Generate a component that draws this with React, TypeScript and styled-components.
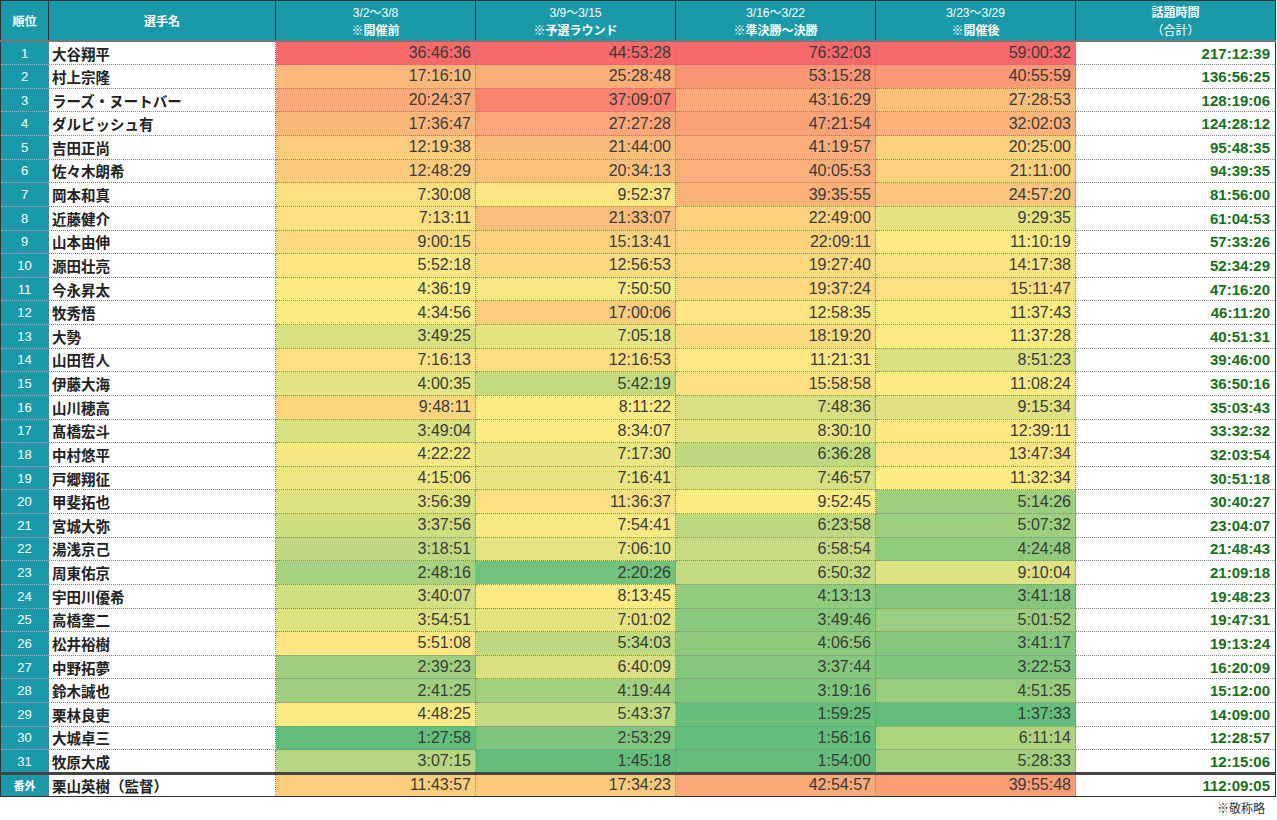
import React from 'react';
import styled, { createGlobalStyle } from 'styled-components';

type Row = [string, string, string, string, string, string, string];

const rows: Row[] = [
  ['1', '大谷翔平', '36:46:36', '44:53:28', '76:32:03', '59:00:32', '217:12:39'],
  ['2', '村上宗隆', '17:16:10', '25:28:48', '53:15:28', '40:55:59', '136:56:25'],
  ['3', 'ラーズ・ヌートバー', '20:24:37', '37:09:07', '43:16:29', '27:28:53', '128:19:06'],
  ['4', 'ダルビッシュ有', '17:36:47', '27:27:28', '47:21:54', '32:02:03', '124:28:12'],
  ['5', '吉田正尚', '12:19:38', '21:44:00', '41:19:57', '20:25:00', '95:48:35'],
  ['6', '佐々木朗希', '12:48:29', '20:34:13', '40:05:53', '21:11:00', '94:39:35'],
  ['7', '岡本和真', '7:30:08', '9:52:37', '39:35:55', '24:57:20', '81:56:00'],
  ['8', '近藤健介', '7:13:11', '21:33:07', '22:49:00', '9:29:35', '61:04:53'],
  ['9', '山本由伸', '9:00:15', '15:13:41', '22:09:11', '11:10:19', '57:33:26'],
  ['10', '源田壮亮', '5:52:18', '12:56:53', '19:27:40', '14:17:38', '52:34:29'],
  ['11', '今永昇太', '4:36:19', '7:50:50', '19:37:24', '15:11:47', '47:16:20'],
  ['12', '牧秀悟', '4:34:56', '17:00:06', '12:58:35', '11:37:43', '46:11:20'],
  ['13', '大勢', '3:49:25', '7:05:18', '18:19:20', '11:37:28', '40:51:31'],
  ['14', '山田哲人', '7:16:13', '12:16:53', '11:21:31', '8:51:23', '39:46:00'],
  ['15', '伊藤大海', '4:00:35', '5:42:19', '15:58:58', '11:08:24', '36:50:16'],
  ['16', '山川穂高', '9:48:11', '8:11:22', '7:48:36', '9:15:34', '35:03:43'],
  ['17', '髙橋宏斗', '3:49:04', '8:34:07', '8:30:10', '12:39:11', '33:32:32'],
  ['18', '中村悠平', '4:22:22', '7:17:30', '6:36:28', '13:47:34', '32:03:54'],
  ['19', '戸郷翔征', '4:15:06', '7:16:41', '7:46:57', '11:32:34', '30:51:18'],
  ['20', '甲斐拓也', '3:56:39', '11:36:37', '9:52:45', '5:14:26', '30:40:27'],
  ['21', '宮城大弥', '3:37:56', '7:54:41', '6:23:58', '5:07:32', '23:04:07'],
  ['22', '湯浅京己', '3:18:51', '7:06:10', '6:58:54', '4:24:48', '21:48:43'],
  ['23', '周東佑京', '2:48:16', '2:20:26', '6:50:32', '9:10:04', '21:09:18'],
  ['24', '宇田川優希', '3:40:07', '8:13:45', '4:13:13', '3:41:18', '19:48:23'],
  ['25', '高橋奎二', '3:54:51', '7:01:02', '3:49:46', '5:01:52', '19:47:31'],
  ['26', '松井裕樹', '5:51:08', '5:34:03', '4:06:56', '3:41:17', '19:13:24'],
  ['27', '中野拓夢', '2:39:23', '6:40:09', '3:37:44', '3:22:53', '16:20:09'],
  ['28', '鈴木誠也', '2:41:25', '4:19:44', '3:19:16', '4:51:35', '15:12:00'],
  ['29', '栗林良吏', '4:48:25', '5:43:37', '1:59:25', '1:37:33', '14:09:00'],
  ['30', '大城卓三', '1:27:58', '2:53:29', '1:56:16', '6:11:14', '12:28:57'],
  ['31', '牧原大成', '3:07:15', '1:45:18', '1:54:00', '5:28:33', '12:15:06'],
];

const extra: Row = ['番外', '栗山英樹（監督）', '11:43:57', '17:34:23', '42:54:57', '39:55:48', '112:09:05'];

const periods = [
  ['3/2〜3/8', '※開催前'],
  ['3/9〜3/15', '※予選ラウンド'],
  ['3/16〜3/22', '※準決勝〜決勝'],
  ['3/23〜3/29', '※開催後'],
];

// excel style 3 colour scale: green (min) -> yellow (median) -> red (max)
const GREEN = [99, 190, 123];
const YELLOW = [255, 235, 132];
const RED = [248, 105, 107];

const toSec = (t: string) => {
  const [h, m, s] = t.split(':').map(Number);
  return h * 3600 + m * 60 + s;
};

const mix = (a: number[], b: number[], f: number) =>
  `rgb(${a.map((v, i) => Math.round(v + (b[i] - v) * f)).join(',')})`;

const scales = [0, 1, 2, 3].map((c) => {
  const vals = rows.map((r) => toSec(r[c + 2])).sort((a, b) => a - b);
  return { min: vals[0], mid: vals[Math.floor(vals.length / 2)], max: vals[vals.length - 1] };
});

const cellColor = (col: number, t: string) => {
  const { min, mid, max } = scales[col];
  const v = Math.min(max, Math.max(min, toSec(t)));
  if (v <= mid) return mix(GREEN, YELLOW, (v - min) / (mid - min));
  return mix(YELLOW, RED, (v - mid) / (max - mid));
};

const GlobalStyle = createGlobalStyle`
  body {
    margin: 0;
    background: #fff;
    font-family: "Liberation Sans", "Noto Sans CJK JP", sans-serif;
  }
`;

const Wrap = styled.div`
  width: 1275px;
`;

const Table = styled.table`
  width: 1275px;
  border-collapse: collapse;
  table-layout: fixed;
  border: 1px solid #333;
`;

const HeadCell = styled.th`
  height: 37px;
  padding: 2px 0 0;
  background: #1a9aa8;
  color: #fff;
  border: 1px solid #333;
  border-bottom: 2px solid #777;
  font-size: 12px;
  font-weight: bold;
  line-height: 18px;
  vertical-align: middle;
`;

const HeadSub = styled.div<{ $light?: boolean }>`
  font-weight: ${(p) => (p.$light ? 'normal' : 'bold')};
`;

const BodyRow = styled.tr<{ $extra?: boolean }>`
  height: ${(p) => (p.$extra ? '23px' : '23.64px')};
  ${(p) => p.$extra && 'border-top: 3px solid #444;'}
`;

const RankCell = styled.td<{ $small?: boolean }>`
  padding: 0;
  background: #1a9aa8;
  color: #fff;
  text-align: center;
  font-size: ${(p) => (p.$small ? '11px' : '13px')};
  font-weight: ${(p) => (p.$small ? 'bold' : 'normal')};
  border: 1px dotted #8fb9be;
  border-left: 1px solid #333;
  border-right: 1px dotted #777;
`;

const NameCell = styled.td`
  padding: 0 3px;
  font-size: 14.5px;
  font-weight: bold;
  color: #222;
  border: 1px dotted #888;
  white-space: nowrap;
`;

const TimeCell = styled.td`
  padding: 0 4px;
  text-align: right;
  font-size: 16px;
  color: #3a3a3a;
  border: 1px dotted #888;
`;

const TotalCell = styled.td`
  padding: 0 5px;
  text-align: right;
  font-size: 15px;
  font-weight: bold;
  color: #19701a;
  border: 1px dotted #888;
  border-right: 1px solid #333;
`;

const Note = styled.div`
  text-align: right;
  font-size: 12px;
  color: #333;
  padding: 2px 10px 0 0;
`;

const renderRow = (r: Row, isExtra = false) => (
  <BodyRow key={r[0]} $extra={isExtra}>
    <RankCell $small={isExtra}>{r[0]}</RankCell>
    <NameCell>{r[1]}</NameCell>
    {[0, 1, 2, 3].map((c) => (
      <TimeCell key={c} style={{ background: cellColor(c, r[c + 2]) }}>
        {r[c + 2]}
      </TimeCell>
    ))}
    <TotalCell>{r[6]}</TotalCell>
  </BodyRow>
);

const App: React.FC = () => {
  return (
    <Wrap>
      <GlobalStyle />
      <Table>
        <colgroup>
          <col style={{ width: 48 }} />
          <col style={{ width: 227 }} />
          <col style={{ width: 200 }} />
          <col style={{ width: 200 }} />
          <col style={{ width: 200 }} />
          <col style={{ width: 200 }} />
          <col style={{ width: 200 }} />
        </colgroup>
        <thead>
          <tr>
            <HeadCell>順位</HeadCell>
            <HeadCell>選手名</HeadCell>
            {periods.map(([d, s]) => (
              <HeadCell key={d}>
                <HeadSub $light>{d}</HeadSub>
                <HeadSub>{s}</HeadSub>
              </HeadCell>
            ))}
            <HeadCell>
              <HeadSub>話題時間</HeadSub>
              <HeadSub $light>（合計）</HeadSub>
            </HeadCell>
          </tr>
        </thead>
        <tbody>
          {rows.map((r) => renderRow(r))}
          {renderRow(extra, true)}
        </tbody>
      </Table>
      <Note>※敬称略</Note>
    </Wrap>
  );
};

export default App;
